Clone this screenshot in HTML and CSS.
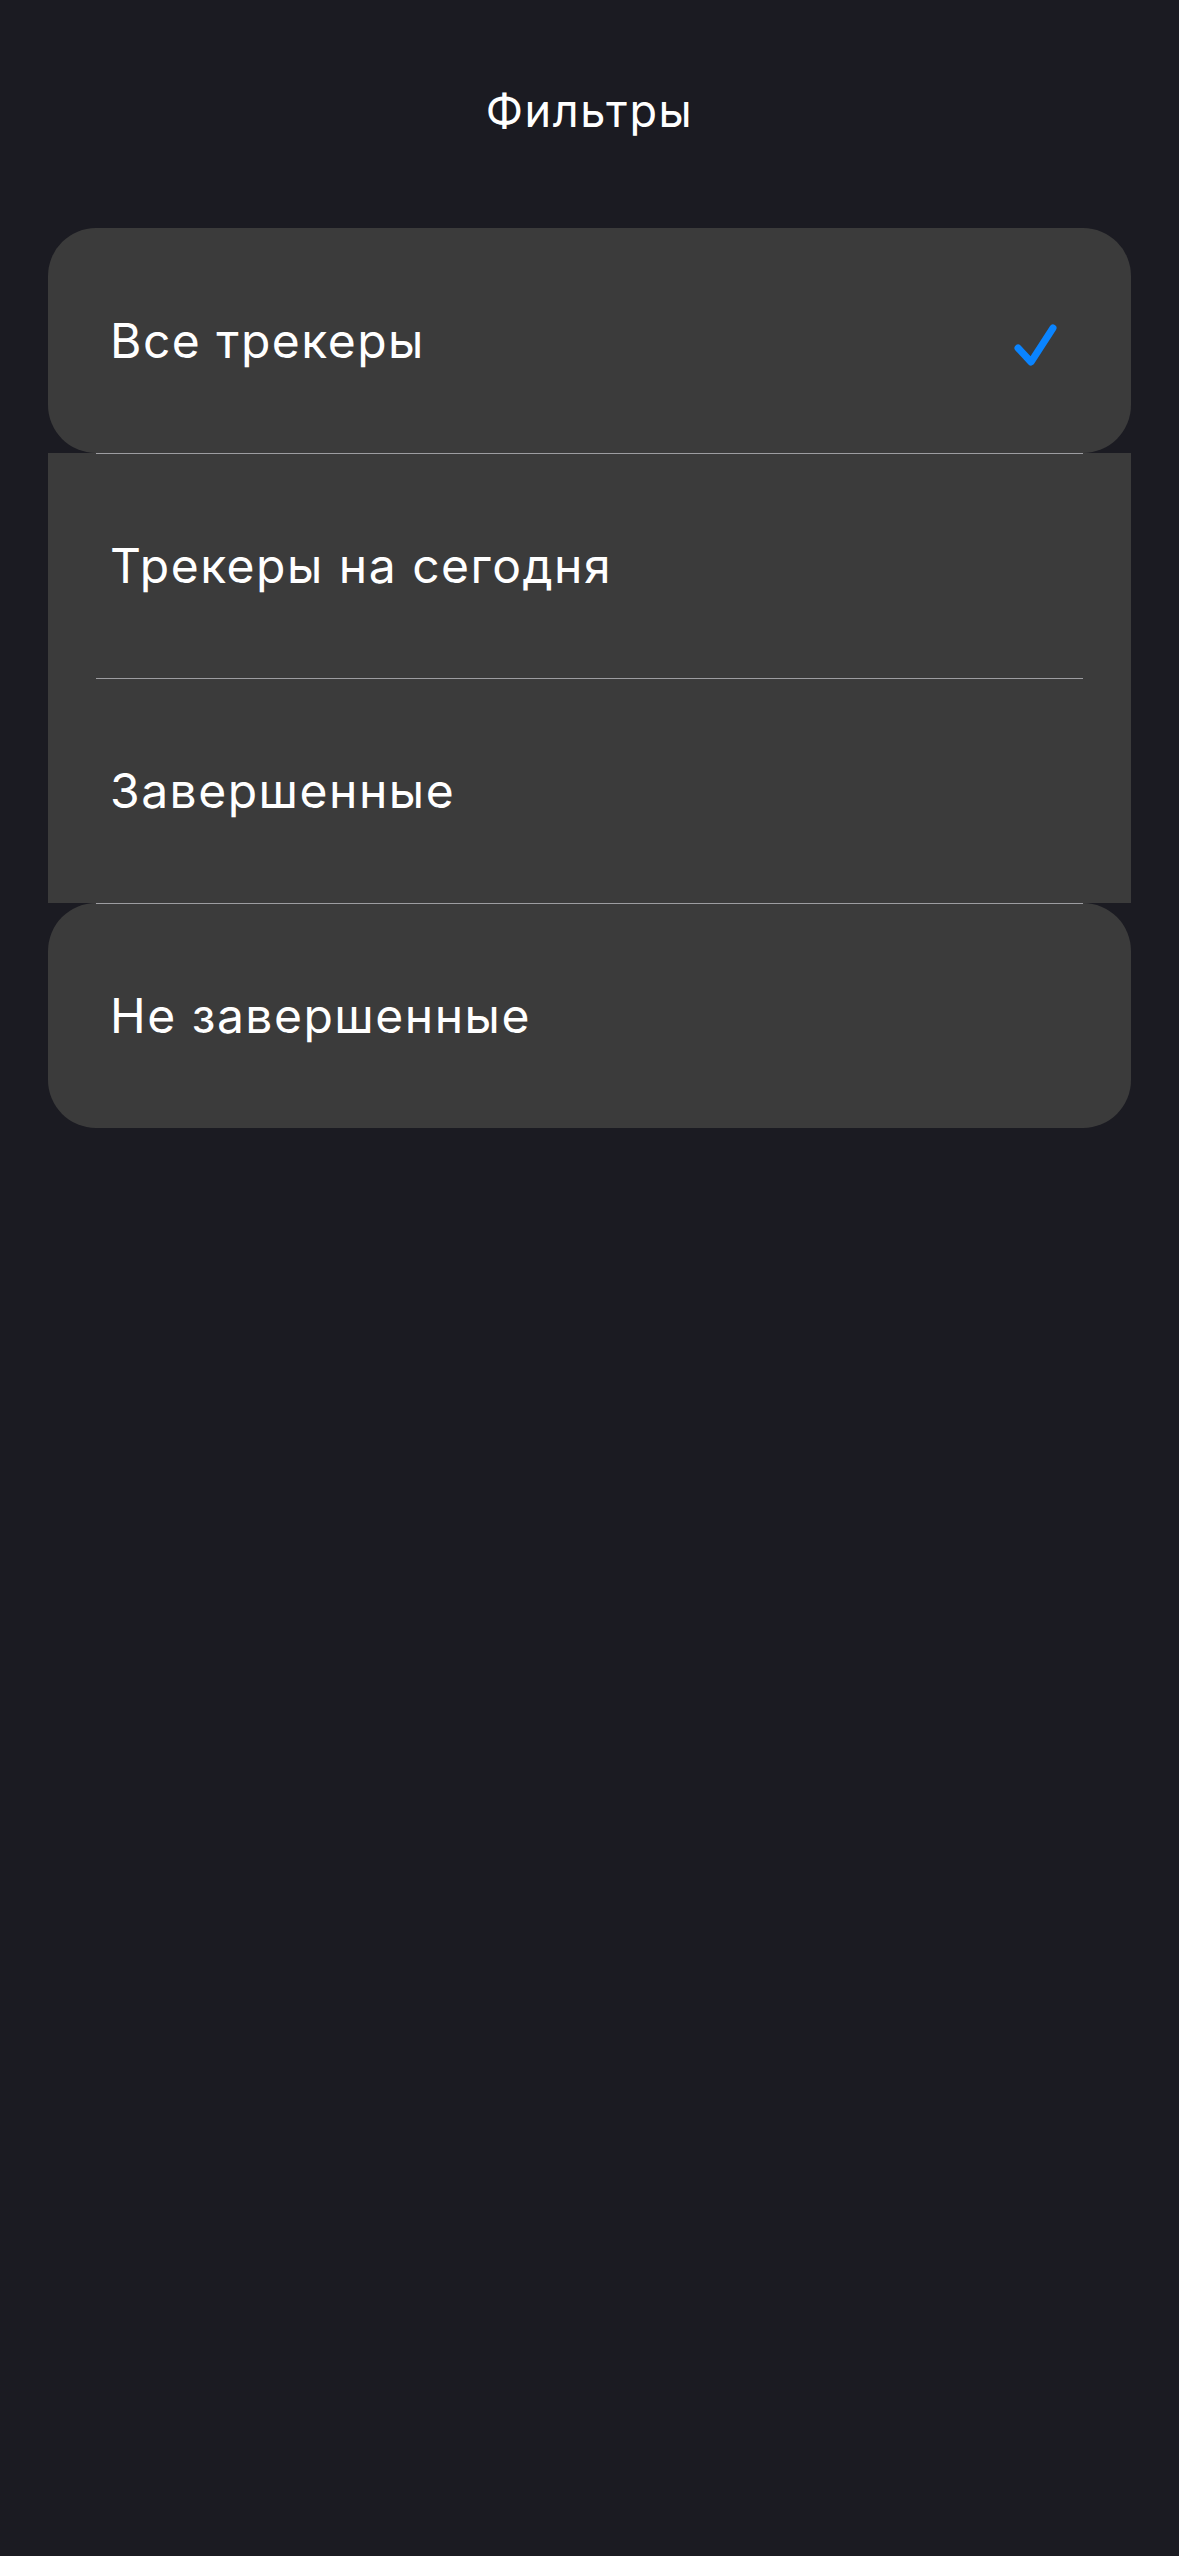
FILE: index.html
```html
<!DOCTYPE html>
<html lang="ru">
<head>
<meta charset="utf-8">
<title>Фильтры</title>
<link rel="stylesheet" href="styles.css">
</head>
<body>
<div class="screen">
  <header class="nav">
    <h1 class="nav-title">Фильтры</h1>
  </header>
  <ul class="list">
    <li class="row row-single">
      <span class="row-label">Все трекеры</span>
      <svg class="check" width="48" height="48" viewBox="0 0 48 48" aria-hidden="true">
        <path d="M6 25 L19 39 L41 5" fill="none" stroke="#0a84ff" stroke-width="7" stroke-linecap="round" stroke-linejoin="round"/>
      </svg>
    </li>
    <li class="row">
      <span class="row-label">Трекеры на сегодня</span>
    </li>
    <li class="row">
      <span class="row-label">Завершенные</span>
    </li>
    <li class="row row-single row-last">
      <span class="row-label">Не завершенные</span>
    </li>
  </ul>
</div>
</body>
</html>
```
FILE: styles.css
```css
* { box-sizing: border-box; }
html, body {
  margin: 0;
  padding: 0;
  background: #1b1b22;
}
body {
  font-family: Inter, "Noto Sans", "DejaVu Sans", sans-serif;
  color: #ffffff;
  min-height: 2556px;
}
.screen {
  display: flex;
  flex-direction: column;
}
.nav {
  height: 228px;
  display: flex;
  justify-content: center;
  padding-top: 82px;
}
.nav-title {
  margin: 0;
  font-size: 45px;
  font-weight: 400;
  line-height: 58px;
  letter-spacing: 1.6px;
}
.list {
  list-style: none;
  margin: 0 48px;
  padding: 0;
  display: flex;
  flex-direction: column;
}
.row {
  position: relative;
  height: 225px;
  background: #3b3b3b;
  display: flex;
  align-items: center;
  justify-content: space-between;
  padding: 0 56px 0 62px;
}
.row-single {
  border-radius: 48px;
}
.row:not(.row-last)::after {
  content: "";
  position: absolute;
  left: 48px;
  right: 48px;
  bottom: -1px;
  height: 1px;
  background: #9d9da1;
  z-index: 1;
}
.row-label {
  font-size: 48px;
  font-weight: 400;
  letter-spacing: 1.5px;
  line-height: 1;
}
.check {
  display: block;
  margin-right: 15px;
  margin-top: 12px;
}
```
